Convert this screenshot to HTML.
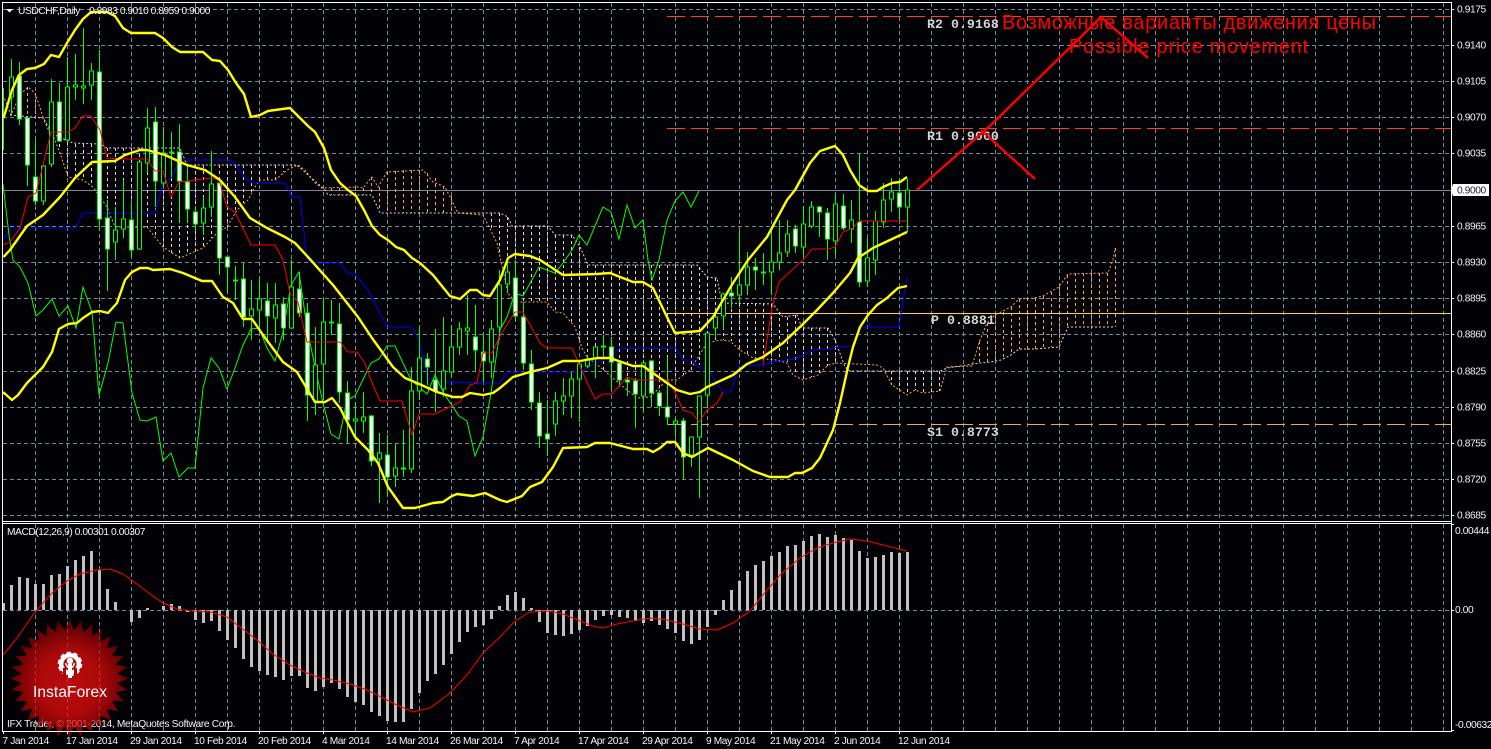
<!DOCTYPE html>
<html lang="en"><head><meta charset="utf-8"><title>USDCHF,Daily</title>
<style>
html,body{margin:0;padding:0;background:#020106;width:1491px;height:749px;overflow:hidden}
svg{display:block}
text{font-family:"Liberation Sans",sans-serif;font-size:10.2px;letter-spacing:-.4px;fill:#f4f4f4}
.m{font-family:"Liberation Mono",monospace;font-size:13.3px;font-weight:bold;fill:#d4d4d4;letter-spacing:0}
.r{font-size:20px;fill:#f00;letter-spacing:0}
</style></head><body>
<svg width="1491" height="749" viewBox="0 0 1491 749" xmlns="http://www.w3.org/2000/svg">
<defs><radialGradient id="g" cx="50%" cy="54%" r="52%"><stop offset="0" stop-color="#ff1010"/><stop offset=".5" stop-color="#f00c0c"/><stop offset="1" stop-color="#800000"/></radialGradient></defs>
<rect width="1491" height="749" fill="#020106"/>

<!-- grid -->
<g fill="none" stroke="#778899" stroke-width="1" stroke-dasharray="4 3" shape-rendering="crispEdges">
<path d="M3 9.5H1451M3 45.5H1451M3 81.5H1451M3 117.5H1451M3 153.5H1451M3 226.5H1451M3 262.5H1451M3 298.5H1451M3 334.5H1451M3 371.5H1451M3 407.5H1451M3 443.5H1451M3 479.5H1451M3 515.5H1451M3 610.5H1451"/>
<path d="M35.5 3V521M67.5 3V521M99.5 3V521M131.5 3V521M163.5 3V521M195.5 3V521M227.5 3V521M259.5 3V521M291.5 3V521M323.5 3V521M355.5 3V521M387.5 3V521M419.5 3V521M451.5 3V521M483.5 3V521M515.5 3V521M547.5 3V521M579.5 3V521M611.5 3V521M643.5 3V521M675.5 3V521M707.5 3V521M739.5 3V521M771.5 3V521M803.5 3V521M835.5 3V521M867.5 3V521M899.5 3V521M931.5 3V521M963.5 3V521M995.5 3V521M1027.5 3V521M1059.5 3V521M1091.5 3V521M1123.5 3V521M1155.5 3V521M1187.5 3V521M1219.5 3V521M1251.5 3V521M1283.5 3V521M1315.5 3V521M1347.5 3V521M1379.5 3V521M1411.5 3V521M1443.5 3V521"/>
<path d="M35.5 524V731M67.5 524V731M99.5 524V731M131.5 524V731M163.5 524V731M195.5 524V731M227.5 524V731M259.5 524V731M291.5 524V731M323.5 524V731M355.5 524V731M387.5 524V731M419.5 524V731M451.5 524V731M483.5 524V731M515.5 524V731M547.5 524V731M579.5 524V731M611.5 524V731M643.5 524V731M675.5 524V731M707.5 524V731M739.5 524V731M771.5 524V731M803.5 524V731M835.5 524V731M867.5 524V731M899.5 524V731M931.5 524V731M963.5 524V731M995.5 524V731M1027.5 524V731M1059.5 524V731M1091.5 524V731M1123.5 524V731M1155.5 524V731M1187.5 524V731M1219.5 524V731M1251.5 524V731M1283.5 524V731M1315.5 524V731M1347.5 524V731M1379.5 524V731M1411.5 524V731M1443.5 524V731"/>
</g>
<path d="M3 190.5H1451" stroke="#778899" shape-rendering="crispEdges"/>

<!-- cloud hatch -->
<g fill="none" stroke-width="1" stroke-dasharray="3 3" shape-rendering="crispEdges">
<path stroke="#f4a460" d="M19.5 95V116M27.5 87V116M35.5 93V117M331.5 188V195M339.5 188V195M347.5 188V195M355.5 187V195M363.5 188V195M371.5 177V195M379.5 187V211M387.5 172V213M395.5 171V213M403.5 170V213M411.5 170V213M419.5 170V213M427.5 173V213M435.5 178V213M443.5 186V213M451.5 196V213M979.5 341V363M987.5 323V362M995.5 315V361M1003.5 312V360M1011.5 307V355M1019.5 299V349M1027.5 298V349M1035.5 298V349M1043.5 296V348M1051.5 292V347M1059.5 287V347M1067.5 275V327M1075.5 273V327M1083.5 273V327M1091.5 273V327M1099.5 273V327M1107.5 273V327M1115.5 248V327"/>
<path stroke="#ecd0d8" d="M59.5 138V150M67.5 142V177M75.5 144V178M83.5 144V180M91.5 144V186M99.5 144V197M107.5 148V207M115.5 148V227M123.5 148V227M131.5 148V227M139.5 148V227M147.5 148V227M155.5 148V237M163.5 148V247M171.5 148V254M179.5 148V258M187.5 165V255M195.5 165V251M203.5 165V248M211.5 165V238M219.5 165V230M227.5 165V227M235.5 165V212M243.5 165V203M251.5 165V195M259.5 165V180M267.5 165V180M275.5 165V180M283.5 165V172M491.5 213V230M499.5 213V255M507.5 217V292M515.5 226V302M523.5 226V302M531.5 226V302M539.5 226V302M547.5 226V302M555.5 235V312M563.5 235V313M571.5 235V323M579.5 247V340M587.5 265V357M595.5 265V365M603.5 265V370M611.5 265V375M619.5 265V385M627.5 265V390M635.5 265V397M643.5 265V398M651.5 265V395M659.5 265V388M667.5 265V380M675.5 265V380M683.5 265V375M691.5 265V371M699.5 267V365M707.5 277V343M715.5 278V340M723.5 303V340M731.5 303V341M739.5 303V349M747.5 303V355M755.5 303V358M763.5 303V360M771.5 304V360M779.5 312V362M787.5 317V363M795.5 315V372M803.5 328V380M811.5 328V377M819.5 328V374M827.5 328V366M835.5 340V364M891.5 371V385M899.5 371V390M907.5 371V395M915.5 371V390M923.5 371V393M931.5 371V392M939.5 371V391"/>
</g>
<!-- cloud borders -->
<polyline fill="none" stroke="#f4a460" stroke-dasharray="2 2" points="3,95 11,115 20,95 28,87 35,93 43,117 52,133 60,153 68,177 83,180 93,187 100,197 107,207 115,227 147,227 163,247 180,258 203,248 217,233 227,227 237,210 248,200 255,187 260,180 275,180 287,170 298,165 305,170 315,183 322,188 358,187 363,188 372,177 378,187 387,172 423,170 433,182 445,187 458,213 483,215 497,243 500,257 508,293 515,302 547,302 555,312 563,313 575,327 582,348 587,357 600,367 627,390 637,398 650,397 667,380 677,380 690,370 707,343 720,340 730,341 740,350 753,358 777,360 787,363 793,375 803,380 818,375 828,365 837,363 877,365 883,368 892,385 907,395 915,390 923,393 940,391 947,367 972,366 980,340 987,323 995,315 1011,307 1019,299 1034,298 1043,296 1059,287 1068,274 1108,273 1113,260 1115,248"/>
<polyline fill="none" stroke="#ecd0d8" stroke-dasharray="2 2" points="10,115 43,118 50,133 73,143 100,144 107,148 180,148 187,165 297,165 325,190 328,195 372,195 380,213 500,213 508,217 512,226 548,226 555,235 572,235 580,247 588,265 697,265 707,277 717,278 720,293 723,303 773,304 783,317 797,315 802,328 828,328 835,340 845,367 850,371 940,371 947,368 980,363 991,362 1001,360 1011,355 1019,349 1036,349 1059,347 1068,327 1114,327"/>

<!-- pivot lines -->
<g fill="none" shape-rendering="crispEdges">
<path d="M667 16.5H1451M667 128.5H1451" stroke="#ff4500" stroke-dasharray="18 6"/>
<path d="M667 424.5H1451" stroke="#dca898" stroke-dasharray="18 6"/>
<path d="M667 313.5H1451" stroke="#ffd040"/>
</g>
<text class="m" x="927" y="28">R2 0.9168</text>
<text class="m" x="927" y="140">R1 0.9060</text>
<text class="m" x="931" y="324">P 0.8881</text>
<text class="m" x="927" y="436">S1 0.8773</text>

<!-- blue -->
<polyline fill="none" stroke="#0000ff" points="3,240 10,228 75,228 83,213 155,213 163,183 171,178 180,160 228,160 235,163 245,178 252,183 285,183 292,197 300,197 307,260 313,263 340,263 348,274 355,274 368,290 387,327 412,327 419,340 428,378 437,382 500,383 507,372 580,372 597,362 610,357 620,348 676,348 683,360 692,360 699,368 707,368 723,392 731,392 739,366 763,365 772,362 795,359 812,350 828,349 837,347 853,346 860,327 899,327 907,277"/>
<!-- chikou -->
<polyline fill="none" stroke="#00ff00" points="3,184 9,235 13,260 20,267 28,283 36,316 43,310 52,299 59,316 68,306 76,328 83,287 92,312 99,395 108,363 116,322 123,323 132,393 140,420 147,421 156,417 163,461 171,453 179,477 188,468 195,468 203,388 211,358 219,368 227,389 235,368 243,345 251,329 259,328 267,348 275,361 283,332 291,285 299,272 307,328 315,367 323,403 331,434 339,439 347,400 355,396 371,363 379,359 387,346 395,346 411,380 427,394 435,375 443,392 459,416 467,421 475,456 483,437 491,393 500,330 507,317 515,293 523,296 539,267 555,273 563,263 572,250 579,235 587,245 603,207 611,212 619,239 627,205 635,228 643,220 648,260 652,280 659,260 667,220 675,201 683,192 691,207 699,191"/>

<!-- candles -->
<path fill="none" stroke="#00ff00" shape-rendering="crispEdges" d="M3.5 88V150M11.5 59V115M19.5 62V125M27.5 118V186M35.5 140V205M43.5 165V205M51.5 79V167M59.5 83V142M67.5 57V142M75.5 54V100M83.5 28V104M91.5 63V100M99.5 50V230M107.5 200V291M115.5 207V260M123.5 180V238M131.5 202V258M139.5 177V250M147.5 108V173M155.5 107V207M163.5 127V187M171.5 132V177M179.5 124V223M187.5 167V223M195.5 207V230M203.5 197V235M211.5 151V217M219.5 183V275M227.5 257V293M235.5 266V300M243.5 263V327M251.5 280V340M259.5 278V330M267.5 283V343M275.5 283V343M283.5 297V340M291.5 260V328M299.5 272V317M307.5 303V421M315.5 327V415M323.5 298V400M331.5 300V335M339.5 303V403M347.5 381V443M355.5 403V437M363.5 392V433M371.5 415V466M379.5 433V503M387.5 435V497M395.5 443V487M403.5 430V477M411.5 367V473M419.5 327V400M427.5 353V385M435.5 329V412M443.5 317V397M451.5 325V377M459.5 322V355M467.5 295V355M475.5 305V371M483.5 333V382M491.5 320V378M499.5 270V340M507.5 260V293M515.5 260V322M523.5 302V370M531.5 350V410M539.5 392V448M547.5 400V456M555.5 392V436M563.5 378V415M571.5 372V418M579.5 360V422M587.5 355V368M595.5 346V378M603.5 335V358M611.5 338V390M619.5 360V387M627.5 377V396M635.5 378V428M643.5 362V413M651.5 360V407M659.5 390V416M667.5 357V425M675.5 418V437M683.5 418V479M691.5 437V467M699.5 396V498M707.5 333V408M715.5 317V338M723.5 293V329M731.5 277V308M739.5 230V303M747.5 252V295M755.5 258V290M763.5 253V285M771.5 230V295M779.5 220V270M787.5 220V257M795.5 225V253M803.5 206V257M811.5 201V228M819.5 206V237M827.5 208V260M835.5 194V255M843.5 194V230M851.5 200V243M859.5 153V287M867.5 238V287M875.5 211V275M883.5 183V228M891.5 178V212M899.5 178V220M907.5 179V232"/>
<path fill="#020106" stroke="#00ff00" shape-rendering="crispEdges" d="M9.5 77h4v20h-4zM41.5 166h4v35h-4zM49.5 102h4v62h-4zM65.5 87h4v53h-4zM73.5 85h4v2h-4zM81.5 86h4v2h-4zM89.5 71h4v14h-4zM113.5 230h4v12h-4zM121.5 219h4v10h-4zM137.5 162h4v87h-4zM145.5 128h4v35h-4zM161.5 153h4v30h-4zM169.5 152h4v1h-4zM201.5 208h4v15h-4zM209.5 184h4v23h-4zM233.5 280h4v1h-4zM249.5 309h4v7h-4zM257.5 299h4v11h-4zM273.5 305h4v13h-4zM289.5 287h4v41h-4zM313.5 365h4v36h-4zM321.5 322h4v42h-4zM329.5 322h4v1h-4zM353.5 419h4v2h-4zM361.5 417h4v4h-4zM377.5 453h4v6h-4zM393.5 468h4v8h-4zM401.5 468h4v1h-4zM409.5 391h4v78h-4zM417.5 358h4v33h-4zM441.5 371h4v18h-4zM449.5 347h4v25h-4zM457.5 329h4v18h-4zM465.5 328h4v3h-4zM489.5 329h4v33h-4zM497.5 285h4v42h-4zM505.5 272h4v12h-4zM553.5 401h4v23h-4zM561.5 396h4v5h-4zM569.5 379h4v17h-4zM577.5 364h4v15h-4zM585.5 359h4v7h-4zM593.5 347h4v12h-4zM601.5 346h4v1h-4zM641.5 363h4v33h-4zM673.5 421h4v3h-4zM689.5 437h4v18h-4zM697.5 396h4v41h-4zM705.5 333h4v62h-4zM713.5 317h4v11h-4zM721.5 294h4v22h-4zM737.5 285h4v10h-4zM745.5 267h4v18h-4zM761.5 272h4v1h-4zM769.5 262h4v10h-4zM777.5 253h4v9h-4zM785.5 234h4v18h-4zM801.5 224h4v23h-4zM809.5 207h4v19h-4zM833.5 204h4v37h-4zM849.5 220h4v9h-4zM865.5 258h4v23h-4zM873.5 221h4v39h-4zM881.5 200h4v22h-4zM889.5 192h4v7h-4zM905.5 190h4v17h-4z"/>
<path fill="#fff" stroke="#00ff00" shape-rendering="crispEdges" d="M17.5 76h4v43h-4zM25.5 118h4v47h-4zM33.5 177h4v24h-4zM57.5 102h4v39h-4zM97.5 72h4v147h-4zM105.5 218h4v31h-4zM129.5 220h4v30h-4zM153.5 122h4v59h-4zM177.5 152h4v29h-4zM185.5 182h4v27h-4zM193.5 212h4v12h-4zM217.5 183h4v75h-4zM225.5 257h4v10h-4zM241.5 279h4v38h-4zM265.5 301h4v15h-4zM281.5 304h4v24h-4zM297.5 289h4v24h-4zM305.5 313h4v82h-4zM337.5 324h4v68h-4zM345.5 393h4v27h-4zM369.5 416h4v45h-4zM385.5 455h4v22h-4zM425.5 359h4v8h-4zM433.5 380h4v11h-4zM473.5 337h4v13h-4zM481.5 352h4v9h-4zM513.5 278h4v38h-4zM521.5 317h4v46h-4zM529.5 364h4v38h-4zM537.5 403h4v33h-4zM545.5 434h4v5h-4zM609.5 347h4v15h-4zM617.5 363h4v17h-4zM625.5 380h4v2h-4zM633.5 381h4v13h-4zM649.5 361h4v32h-4zM657.5 393h4v13h-4zM665.5 407h4v10h-4zM681.5 421h4v36h-4zM729.5 293h4v3h-4zM753.5 267h4v3h-4zM793.5 229h4v17h-4zM817.5 207h4v5h-4zM825.5 213h4v26h-4zM841.5 206h4v22h-4zM857.5 222h4v60h-4zM897.5 193h4v14h-4z"/>
<!-- red -->
<polyline fill="none" stroke="#ff0000" points="3,245 10,242 20,228 28,197 36,193 43,165 51,132 68,132 75,128 83,116 91,116 100,130 107,158 125,159 147,159 155,171 163,171 171,197 179,182 195,180 211,178 219,180 227,207 235,212 251,245 275,245 283,260 290,293 298,302 307,342 340,342 348,352 357,352 365,363 372,383 380,401 402,401 412,435 419,414 435,414 460,402 470,385 477,383 483,353 492,353 500,336 515,312 523,312 540,343 547,348 572,348 587,382 595,399 603,394 612,394 627,377 635,380 667,380 675,392 683,410 692,413 699,422 707,410 717,403 723,392"/>
<polyline fill="none" stroke="#ff0000" points="763,365 772,308 779,282 803,260 812,249 828,249 835,247 843,232 853,228 859,221 907,221"/>
<!-- yellow -->
<g fill="none" stroke="#ffff00" stroke-width="2.4" stroke-linejoin="round">
<polyline points="3.5,118 12,90 19,75 27,69 35,68 44,64 51,55 59,57 67,43 75,30 83,19 91,12 107,12 115,16 123,28 131,33 155,33 163,38 172,47 180,52 203,52 212,60 220,61 228,70 236,83 244,94 251,117 260,115 268,111 275,110 290,108 300,118 308,126 315,132 324,148 331,170 340,183 348,190 356,196 364,210 372,226 380,235 388,240 396,247 404,250 412,258 420,263 433,275 450,296 460,299 470,290 477,290 483,295 490,296 500,280 508,258 515,254 530,256 540,260 563,275 597,274 610,273 633,282 643,282 653,288 667,317 675,333 700,331 713,317 733,283 748,260 767,237 787,200 795,190 810,163 820,151 835,146 843,155 850,170 859,185 868,191 877,191 883,187 892,183 900,182 907,177"/>
<polyline points="3.5,257 10,250 27,226 43,215 60,197 75,178 92,162 115,161 125,155 140,150 147,150 165,155 187,165 205,170 220,180 235,197 250,218 267,228 285,237 295,243 308,257 333,285 358,317 372,338 393,367 405,378 417,383 437,392 453,397 462,397 470,393 483,395 493,393 500,388 513,377 530,372 547,368 563,361 580,361 597,358 610,358 633,366 643,366 660,378 677,390 690,394 700,392 707,387 733,375 747,364 763,357 783,343 802,325 817,310 833,293 850,273 858,258 873,248 890,240 907,232"/>
<polyline points="3,392 12,400 18,395 27,383 43,367 52,352 59,329 68,324 77,323 83,318 92,312 100,311 108,313 117,303 125,280 132,272 140,268 148,268 153,270 170,269 183,273 202,281 212,281 223,297 233,303 243,319 252,319 263,335 283,362 297,372 315,402 325,402 332,398 340,408 355,437 368,450 378,463 388,487 403,508 415,508 433,503 443,502 452,496 457,494 473,496 485,493 500,500 507,502 522,496 530,487 542,482 553,467 563,448 587,447 595,443 610,443 633,449 647,449 653,452 660,448 667,442 675,442 683,453 692,457 708,448 733,460 753,471 770,477 788,477 795,473 802,473 812,468 820,458 833,430 840,403 848,367 853,347 860,327 868,315 877,305 887,298 898,288 907,286"/>
</g>

<!-- trend arrows -->
<g fill="none" stroke="#ff0000" stroke-width="2.4">
<polyline points="917,190 991,125 1101,17 1148,58"/>
<polyline points="981,130 1035,179"/>
</g>
<text class="r" x="1002" y="29" textLength="374">Возможные варианты движения цены</text>
<text class="r" x="1069" y="53" textLength="239">Possible price movement</text>

<!-- MACD -->
<path fill="none" stroke="#c0c0c0" stroke-width="3" shape-rendering="crispEdges" d="M3.5 610V603M11.5 610V585M19.5 610V577M27.5 610V578M35.5 610V584M43.5 610V584M51.5 610V575M59.5 610V574M67.5 610V566M75.5 610V560M83.5 610V556M91.5 610V551M99.5 610V570M107.5 610V589M115.5 610V602M131.5 610V622M139.5 610V618M147.5 610V608M163.5 610V606M171.5 610V604M179.5 610V606M187.5 610V612M195.5 610V620M203.5 610V623M211.5 610V621M219.5 610V631M227.5 610V640M235.5 610V648M243.5 610V659M251.5 610V667M259.5 610V671M267.5 610V675M275.5 610V677M283.5 610V680M291.5 610V676M299.5 610V676M307.5 610V688M315.5 610V691M323.5 610V687M331.5 610V683M339.5 610V689M347.5 610V697M355.5 610V702M363.5 610V705M371.5 610V712M379.5 610V716M387.5 610V721M395.5 610V722M403.5 610V722M411.5 610V709M419.5 610V693M427.5 610V681M435.5 610V674M443.5 610V665M451.5 610V654M459.5 610V642M467.5 610V632M475.5 610V627M483.5 610V625M491.5 610V619M499.5 610V606M507.5 610V595M515.5 610V592M523.5 610V598M531.5 610V608M539.5 610V622M547.5 610V633M555.5 610V635M563.5 610V636M571.5 610V634M579.5 610V630M587.5 610V626M595.5 610V620M603.5 610V616M611.5 610V615M619.5 610V617M627.5 610V618M635.5 610V621M643.5 610V623M651.5 610V621M659.5 610V625M667.5 610V629M675.5 610V633M683.5 610V641M691.5 610V644M699.5 610V640M707.5 610V627M715.5 610V615M723.5 610V600M731.5 610V590M739.5 610V581M747.5 610V571M755.5 610V565M763.5 610V561M771.5 610V556M779.5 610V552M787.5 610V546M795.5 610V545M803.5 610V541M811.5 610V536M819.5 610V534M827.5 610V537M835.5 610V535M843.5 610V538M851.5 610V540M859.5 610V551M867.5 610V558M875.5 610V557M883.5 610V555M891.5 610V552M899.5 610V553M907.5 610V552"/>
<polyline fill="none" stroke="#ff0000" points="3,655 17,638 33,615 43,603 53,592 67,581 80,574 97,570 110,569 123,574 137,584 150,594 163,603 177,609 193,611 210,612 227,617 240,627 257,640 273,654 290,665 307,673 320,678 333,680 350,684 367,690 383,698 397,705 413,712 430,708 450,693 467,675 483,653 500,637 515,621 530,612 547,611 563,614 580,621 593,626 603,628 617,624 633,621 650,618 667,620 683,624 700,629 717,630 733,623 750,611 763,595 780,575 800,558 817,548 833,543 850,539 867,541 883,545 907,551"/>

<text x="7" y="727" textLength="228">IFX Trader, © 2001-2014, MetaQuotes Software Corp.</text>

<!-- logo -->
<g transform="translate(69.5,678.5)">
<polygon fill="url(#g)" opacity=".72" points="59,0 47.8,4.7 57.9,11.5 45.9,13.9 54.5,22.6 42.3,22.7 49.1,32.8 37.1,30.4 41.7,41.7 30.4,37.1 32.8,49.1 22.7,42.3 22.6,54.5 13.9,45.9 11.5,57.9 4.7,47.8 0,59 -4.7,47.8 -11.5,57.9 -13.9,45.9 -22.6,54.5 -22.7,42.3 -32.8,49.1 -30.4,37.1 -41.7,41.7 -37.1,30.4 -49.1,32.8 -42.3,22.7 -54.5,22.6 -45.9,13.9 -57.9,11.5 -47.8,4.7 -59,0 -47.8,-4.7 -57.9,-11.5 -45.9,-13.9 -54.5,-22.6 -42.3,-22.7 -49.1,-32.8 -37.1,-30.4 -41.7,-41.7 -30.4,-37.1 -32.8,-49.1 -22.7,-42.3 -22.6,-54.5 -13.9,-45.9 -11.5,-57.9 -4.7,-47.8 0,-59 4.7,-47.8 11.5,-57.9 13.9,-45.9 22.6,-54.5 22.7,-42.3 32.8,-49.1 30.4,-37.1 41.7,-41.7 37.1,-30.4 49.1,-32.8 42.3,-22.7 54.5,-22.6 45.9,-13.9 57.9,-11.5 47.8,-4.7"/>
<g transform="translate(0.5,-14.5)">
<circle r="8.8" fill="none" stroke="#fff" stroke-width="4.4"/>
<circle r="11" fill="none" stroke="#fff" stroke-width="2.6" stroke-dasharray="4 2.9"/>
<rect x="-7" y="4" width="3" height="10" fill="#a90707"/>
<rect x="4" y="4" width="3" height="10" fill="#a90707"/>
<rect x="-2" y="0" width="4" height="14" fill="#fff"/>
<circle cx="0" cy="-3" r="3.2" fill="#fff"/>
<path d="M-4.5 -1 Q-3 4 0 4 Q3 4 4.5 -1" fill="none" stroke="#fff" stroke-width="1.4"/>
</g>
</g>
<text x="33" y="697" style="font-size:15.5px;fill:#fff;letter-spacing:0" textLength="74">InstaForex</text>

<!-- frame -->
<g fill="none" stroke="#fff" shape-rendering="crispEdges">
<path d="M2.5 2.5H1451.5V731.5H2.5ZM2.5 521.5H1451.5M2.5 523.5H1451.5"/>
<path d="M1451 9.5h3M1451 45.5h3M1451 81.5h3M1451 117.5h3M1451 153.5h3M1451 226.5h3M1451 262.5h3M1451 298.5h3M1451 334.5h3M1451 371.5h3M1451 407.5h3M1451 443.5h3M1451 479.5h3M1451 515.5h3M1451 524.5h3M1451 610.5h3M1451 730.5h3"/>
<path d="M3.5 731v3M67.5 731v3M131.5 731v3M195.5 731v3M259.5 731v3M323.5 731v3M387.5 731v3M451.5 731v3M515.5 731v3M579.5 731v3M643.5 731v3M707.5 731v3M771.5 731v3M835.5 731v3M899.5 731v3"/>
</g>

<!-- legends -->
<polygon points="6,9 13,9 9.5,12.5" fill="#fff"/>
<text x="18" y="14">USDCHF,Daily</text>
<text x="89" y="14" textLength="121">0.8983 0.9010 0.8959 0.9000</text>
<text x="7" y="535" textLength="138">MACD(12,26,9) 0.00301 0.00307</text>

<!-- price axis -->
<g>
<text x="1457" y="12.5">0.9175</text>
<text x="1457" y="48.5">0.9140</text>
<text x="1457" y="84.5">0.9105</text>
<text x="1457" y="120.5">0.9070</text>
<text x="1457" y="156.5">0.9035</text>
<text x="1457" y="229.5">0.8965</text>
<text x="1457" y="265.5">0.8930</text>
<text x="1457" y="301.5">0.8895</text>
<text x="1457" y="337.5">0.8860</text>
<text x="1457" y="374.5">0.8825</text>
<text x="1457" y="410.5">0.8790</text>
<text x="1457" y="446.5">0.8755</text>
<text x="1457" y="482.5">0.8720</text>
<text x="1457" y="518.5">0.8685</text>
<text x="1455" y="534">0.00444</text>
<text x="1455" y="613">0.00</text>
<text x="1455" y="728">-0.00632</text>
</g>
<polygon points="1451,190.5 1453,184 1489,184 1489,196 1453,196" fill="#fff"/>
<text x="1457" y="193.5" style="fill:#102040">0.9000</text>

<!-- time axis -->
<g>
<text x="2.5" y="744">7 Jan 2014</text>
<text x="66" y="744">17 Jan 2014</text>
<text x="130" y="744">29 Jan 2014</text>
<text x="194" y="744">10 Feb 2014</text>
<text x="258" y="744">20 Feb 2014</text>
<text x="322" y="744">4 Mar 2014</text>
<text x="386" y="744">14 Mar 2014</text>
<text x="450" y="744">26 Mar 2014</text>
<text x="514" y="744">7 Apr 2014</text>
<text x="578" y="744">17 Apr 2014</text>
<text x="642" y="744">29 Apr 2014</text>
<text x="706" y="744">9 May 2014</text>
<text x="770" y="744">21 May 2014</text>
<text x="834" y="744">2 Jun 2014</text>
<text x="898" y="744">12 Jun 2014</text>
</g>
</svg>
</body></html>
